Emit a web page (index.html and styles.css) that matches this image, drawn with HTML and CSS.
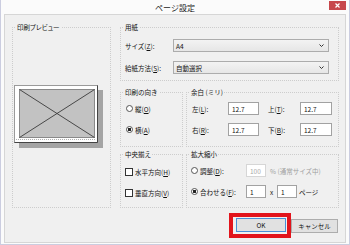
FILE: index.html
```html
<!DOCTYPE html>
<html lang="ja">
<head>
<meta charset="utf-8">
<title>ページ設定</title>
<link rel="stylesheet" href="styles.css">
</head>
<body>
<div class="window">
  <div class="titlebar">
    <span></span>
    <span class="title">ページ設定</span>
    <span class="close"><svg width="5" height="5" viewBox="0 0 5 5"><path d="M0.5 0.5L4.5 4.5M4.5 0.5L0.5 4.5" stroke="#fff" stroke-width="1.2"/></svg></span>
  </div>
  <div class="panel">
    <div class="main">
      <fieldset class="group preview">
        <legend class="narrow">印刷プレビュー</legend>
        <svg class="paper" width="90" height="64" viewBox="0 0 90 64">
          <rect x="5" y="5" width="84" height="58" fill="#a4a4a4"/>
          <rect x="0.5" y="0.5" width="83" height="57" fill="#fff" stroke="#9a9a9a"/>
          <path d="M83.5 0.5V57.5H0.5" fill="none" stroke="#444"/>
          <rect x="5.5" y="4.5" width="75" height="48" fill="#c2c2c2" stroke="#333" stroke-dasharray="1 1"/>
          <path d="M5.5 4.5L80.5 52.5M80.5 4.5L5.5 52.5" stroke="#3a3a3a" stroke-width="0.9"/>
          <path d="M2 54.5H82" stroke="#b0b0b0" stroke-dasharray="1 1"/>
        </svg>
      </fieldset>
      <div class="right">
        <fieldset class="group g-paper">
          <legend>用紙</legend>
          <div class="form">
            <span>サイズ(<u>Z</u>):</span>
            <div class="select"><span>A4</span><svg width="5" height="3" viewBox="0 0 5 3"><path d="M0.5 0.5L2.5 2.5L4.5 0.5" fill="none" stroke="#333"/></svg></div>
            <span>給紙方法(<u>S</u>):</span>
            <div class="select"><span>自動選択</span><svg width="5" height="3" viewBox="0 0 5 3"><path d="M0.5 0.5L2.5 2.5L4.5 0.5" fill="none" stroke="#333"/></svg></div>
          </div>
        </fieldset>
        <div class="pair">
          <fieldset class="group">
            <legend>印刷の向き</legend>
            <div class="opts">
              <div class="opt"><span class="radio"></span><span>縦(<u>O</u>)</span></div>
              <div class="opt"><span class="radio on"></span><span>横(<u>A</u>)</span></div>
            </div>
          </fieldset>
          <fieldset class="group">
            <legend>余白 (ミリ)</legend>
            <div class="mgrid">
              <span>左(<u>L</u>):</span><span class="input">12.7</span><span class="l2">上(<u>T</u>):</span><span class="input">12.7</span>
              <span>右(<u>R</u>):</span><span class="input">12.7</span><span class="l2">下(<u>B</u>):</span><span class="input">12.7</span>
            </div>
          </fieldset>
        </div>
        <div class="pair pair-b">
          <fieldset class="group">
            <legend>中央揃え</legend>
            <div class="checks">
              <div class="opt"><span class="check"></span><span>水平方向(<u>H</u>)</span></div>
              <div class="opt"><span class="check"></span><span>垂直方向(<u>V</u>)</span></div>
            </div>
          </fieldset>
          <fieldset class="group">
            <legend>拡大縮小</legend>
            <div class="scale">
              <div class="srow">
                <div class="opt lead"><span class="radio"></span><span>調整(<u>D</u>):</span></div>
                <span class="input num disabled">100</span>
                <span class="muted">% (通常サイズ中)</span>
              </div>
              <div class="srow">
                <div class="opt lead"><span class="radio on"></span><span>合わせる(<u>F</u>):</span></div>
                <span class="input num">1</span>
                <span class="times">x</span>
                <span class="input num">1</span>
                <span class="pages">ページ</span>
              </div>
            </div>
          </fieldset>
        </div>
      </div>
    </div>
    <div class="buttons">
      <div class="hl"><button class="btn ok">OK</button></div>
      <button class="btn cancel">キャンセル</button>
    </div>
  </div>
</div>
</body>
</html>
```

FILE: styles.css
```css
html, body {
  margin: 0;
  padding: 0;
}
body {
  font-family: "Noto Sans CJK JP", "Noto Sans", sans-serif;
  font-size: 6.5px;
  color: #111;
  background: #fff;
}
u {
  text-decoration: underline;
  text-underline-offset: 1px;
}
.window {
  width: 350px;
  height: 245px;
  box-sizing: border-box;
  border: 1px solid #cbcde0;
  border-top: none;
  background: #fbfbfb;
  padding: 0 3px 1px 3px;
  display: flex;
  flex-direction: column;
}
.titlebar {
  height: 14px;
  flex: none;
  display: grid;
  grid-template-columns: 1fr auto 1fr;
  align-items: start;
}
.title {
  font-size: 8px;
  line-height: 15px;
  color: #222;
}
.close {
  justify-self: end;
  margin-top: 1px;
  width: 17px;
  height: 9px;
  background: #c7474b;
  display: flex;
  align-items: center;
  justify-content: center;
}
.close svg { display: block; }
.panel {
  flex: 1;
  min-height: 0;
  background: #f0f0f0;
  border: 1px solid #d6d6d6;
  padding: 8px 6px 0 7px;
  display: flex;
  flex-direction: column;
}
.main {
  display: grid;
  grid-template-columns: 99px 219px;
  column-gap: 9px;
}
fieldset.group {
  margin: 0;
  padding: 0;
  min-width: 0;
  box-sizing: border-box;
  border: 1px dotted #cdcdcd;
}
legend {
  margin-left: 3px;
  padding: 0 1px;
  line-height: 9px;
  font-size: 6.5px;
}
.narrow {
  font-feature-settings: "palt";
}
.preview {
  height: 185px;
}
.paper {
  display: block;
  margin: 53px 0 0 1px;
}
.right {
  display: flex;
  flex-direction: column;
}
.g-paper {
  height: 58px;
}
.form {
  display: grid;
  grid-template-columns: 48px 156px;
  row-gap: 9px;
  align-items: center;
  padding: 7px 0 0 4px;
}
.select {
  height: 13px;
  box-sizing: border-box;
  border: 1px solid #acacac;
  background: linear-gradient(#f3f3f3, #e6e6e6);
  display: flex;
  align-items: center;
  justify-content: space-between;
  padding: 0 4px 0 2px;
}
.select svg { display: block; }
.pair {
  display: grid;
  grid-template-columns: 63px 153px;
  column-gap: 3px;
  margin-top: 7px;
  height: 59px;
}
.pair-b {
  margin-top: 3px;
  height: 58px;
}
.opts {
  display: flex;
  flex-direction: column;
  gap: 8px;
  padding: 5px 0 0 5px;
}
.checks {
  display: flex;
  flex-direction: column;
  gap: 8px;
  padding: 6px 0 0 4px;
}
.opt {
  height: 13px;
  display: flex;
  align-items: center;
  gap: 2px;
  white-space: nowrap;
}
.radio {
  width: 7px;
  height: 7px;
  box-sizing: border-box;
  border: 1px solid #555;
  border-radius: 50%;
  background: #fff;
  flex: none;
}
.radio.on {
  background: radial-gradient(circle, #222 0 1.4px, #fff 1.9px);
}
.check {
  width: 8px;
  height: 8px;
  box-sizing: border-box;
  border: 1px solid #333;
  background: #fff;
  flex: none;
}
.mgrid {
  display: grid;
  grid-template-columns: 36px 31px 41px 32px;
  row-gap: 8px;
  align-items: center;
  padding: 5px 0 0 5px;
}
.l2 {
  padding-left: 9px;
}
.input {
  height: 13px;
  box-sizing: border-box;
  border: 1px solid #a2a2a2;
  background: #fff;
  padding-left: 3px;
  display: flex;
  align-items: center;
}
.scale {
  display: flex;
  flex-direction: column;
  gap: 8px;
  padding: 5px 0 0 4px;
}
.srow {
  height: 13px;
  display: flex;
  align-items: center;
  white-space: nowrap;
}
.lead {
  width: 55px;
  flex: none;
}
.num {
  width: 20px;
  flex: none;
}
.disabled {
  border-color: #d6d6d6;
  color: #a8a8a8;
}
.muted {
  color: #a0a0a0;
  margin-left: 4px;
}
.times {
  width: 11px;
  text-align: center;
}
.pages {
  margin-left: 2px;
}
.buttons {
  display: flex;
  justify-content: flex-end;
  align-items: center;
  margin-top: 5px;
  padding-right: 1px;
}
.hl {
  border: 4px solid #e2141c;
  padding: 1px 1px 2px 3px;
}
.btn {
  height: 14px;
  box-sizing: border-box;
  margin: 0;
  padding: 0;
  border: 1px solid #adadad;
  background: #e1e1e1;
  font: inherit;
  color: #111;
  display: flex;
  align-items: center;
  justify-content: center;
}
.btn.ok {
  width: 50px;
  border-color: #4a8fd6;
}
.btn.cancel {
  width: 47px;
}
```
